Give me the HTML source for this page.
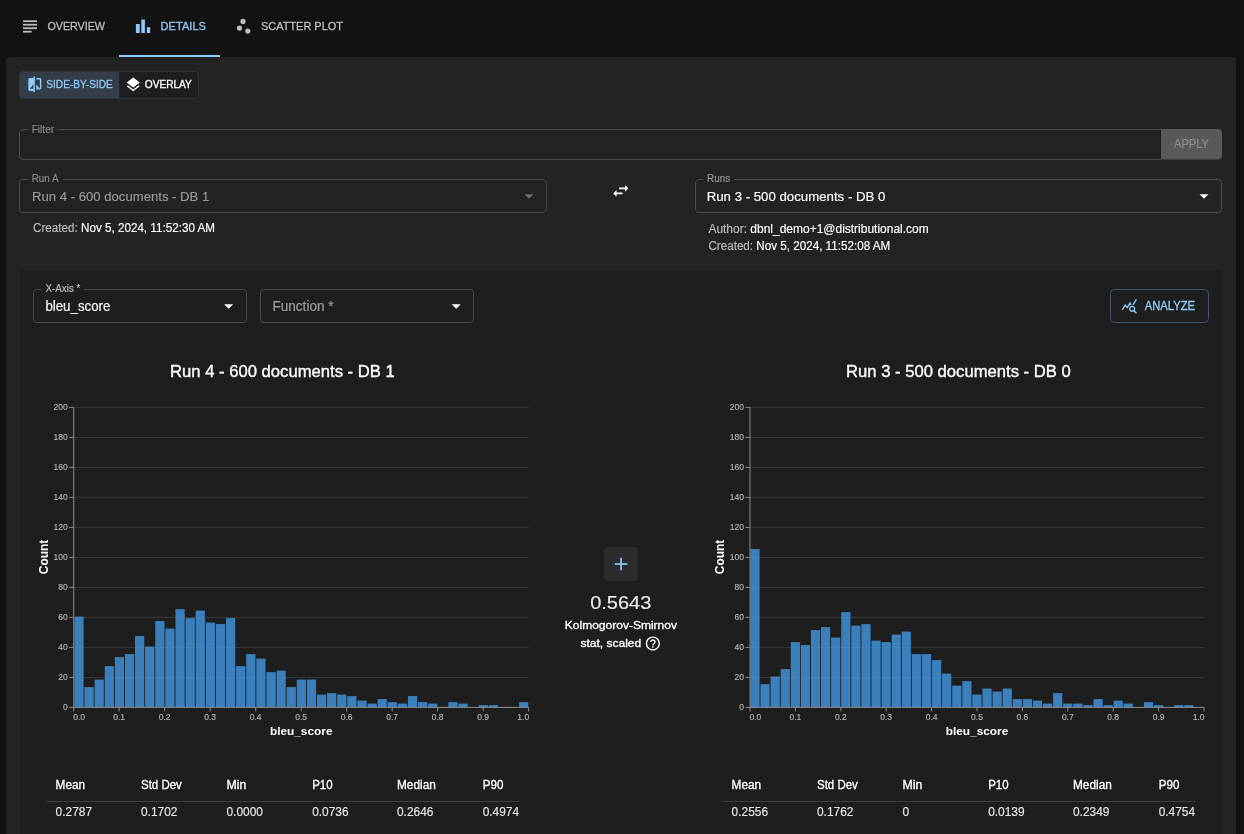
<!DOCTYPE html><html><head><meta charset="utf-8"><title>Details</title><style>
html,body{margin:0;padding:0;background:#121212;width:1244px;height:834px;overflow:hidden}
svg{display:block;will-change:transform;font-family:"Liberation Sans", sans-serif}
</style></head><body>
<svg width="1244" height="834" viewBox="0 0 1244 834">
<rect x="0" y="0" width="1244" height="834" fill="#121212"/>
<rect x="23" y="20.3" width="14" height="1.8" fill="#bdbdbd"/>
<rect x="23" y="23.8" width="14" height="1.8" fill="#bdbdbd"/>
<rect x="23" y="27.3" width="14" height="1.8" fill="#bdbdbd"/>
<rect x="23" y="30.8" width="8.7" height="1.8" fill="#bdbdbd"/>
<text x="47.4" y="30.4" font-size="11.5" fill="#bdbdbd" textLength="57.6" lengthAdjust="spacingAndGlyphs" stroke="#bdbdbd" stroke-width="0.3">OVERVIEW</text>
<rect x="135.9" y="24" width="3.8" height="9" fill="#90caf9"/>
<rect x="141.3" y="19.5" width="3.6" height="13.5" fill="#90caf9"/>
<rect x="146.8" y="27.2" width="3.4" height="5.8" fill="#90caf9"/>
<text x="160.6" y="30.4" font-size="11.5" fill="#90caf9" textLength="45.4" lengthAdjust="spacingAndGlyphs" stroke="#90caf9" stroke-width="0.3">DETAILS</text>
<rect x="119" y="55" width="101" height="2" fill="#90caf9"/>
<circle cx="243" cy="21.4" r="2.6" fill="#bdbdbd"/>
<circle cx="239.5" cy="28.1" r="2.6" fill="#bdbdbd"/>
<circle cx="247.8" cy="31.1" r="2.6" fill="#bdbdbd"/>
<text x="261" y="30.3" font-size="11.5" fill="#bdbdbd" textLength="82" lengthAdjust="spacingAndGlyphs" stroke="#bdbdbd" stroke-width="0.3">SCATTER PLOT</text>
<rect x="6" y="57" width="1230" height="820" rx="4" fill="#232323"/>
<rect x="19.5" y="71.5" width="179" height="27" rx="4" fill="#1e1e1e" stroke="#333333" stroke-width="1"/>
<path d="M119.2,71.5 H23.5 A4,4 0 0 0 19.5,75.5 V94.5 A4,4 0 0 0 23.5,98.5 H119.2 Z" fill="#343d48"/>
<g transform="translate(26.2,75.8) scale(0.72)"><path d="M10 3H5c-1.11 0-2 .9-2 2v14c0 1.1.89 2 2 2h5v2h2V1h-2v2zm0 15H5l5-6v6zm9-15h-5v2h5v13l-5-6v7h5c1.1 0 2-.9 2-2V5c0-1.1-.9-2-2-2z" fill="#90caf9"/></g>
<text x="46.3" y="88.2" font-size="10.6" fill="#90caf9" textLength="66.5" lengthAdjust="spacingAndGlyphs" stroke="#90caf9" stroke-width="0.3">SIDE-BY-SIDE</text>
<g transform="translate(124.6,76.1) scale(0.72)"><path d="m11.99 18.54-7.37-5.73L3 14.07l9 7 9-7-1.63-1.27zM12 16l7.36-5.73L21 9l-9-7-9 7 1.63 1.27L12 16z" fill="#ffffff"/></g>
<text x="144.8" y="88.2" font-size="10.6" fill="#ffffff" textLength="47" lengthAdjust="spacingAndGlyphs" stroke="#ffffff" stroke-width="0.3">OVERLAY</text>
<path d="M27.7,129.5 H23 A3.5,3.5 0 0 0 19.5,133 V156 A3.5,3.5 0 0 0 23,159.5 H1161 M1161,129.5 H57.7" fill="none" stroke="#4a4a4a" stroke-width="1"/>
<rect x="1160" y="130" width="1" height="29" fill="#1c1c1c"/>
<path d="M1161,129 H1218 A4,4 0 0 1 1222,133 V155.5 A4,4 0 0 1 1218,159.5 H1161 Z" fill="#595959"/>
<text x="1191.5" y="148.3" font-size="12" fill="#8e8e8e" text-anchor="middle" textLength="35" lengthAdjust="spacingAndGlyphs" stroke="#8e8e8e" stroke-width="0.2">APPLY</text>
<text x="31.7" y="132.7" font-size="10" fill="#8c8c8c" textLength="22.5" lengthAdjust="spacingAndGlyphs" stroke="#8c8c8c" stroke-width="0.15">Filter</text>
<rect x="19.5" y="179.5" width="527.0" height="33.0" rx="3.5" fill="none" stroke="none"/>
<path d="M27.7,179.5 H23.0 A3.5,3.5 0 0 0 19.5,183.0 V209.0 A3.5,3.5 0 0 0 23.0,212.5 H543.0 A3.5,3.5 0 0 0 546.5,209.0 V183.0 A3.5,3.5 0 0 0 543.0,179.5 H62.7" fill="none" stroke="#4a4a4a" stroke-width="1"/>
<text x="31.7" y="181.7" font-size="10" fill="#8c8c8c" textLength="27" lengthAdjust="spacingAndGlyphs" stroke="#8c8c8c" stroke-width="0.15">Run A</text>
<text x="32" y="200.5" font-size="13" fill="#9a9a9a" textLength="177.3" lengthAdjust="spacingAndGlyphs" stroke="#9a9a9a" stroke-width="0.15">Run 4 - 600 documents - DB 1</text>
<path d="M524.50,194.25 l4.50,4.50 l4.50,-4.50z" fill="#6e6e6e"/>
<text x="33" y="232.2" font-size="12" fill="#bdbdbd" stroke="#bdbdbd" stroke-width="0.15" textLength="182" lengthAdjust="spacingAndGlyphs">Created: <tspan fill="#ffffff" stroke="#ffffff">Nov 5, 2024, 11:52:30 AM</tspan></text>
<g transform="translate(610.7,180.8) scale(0.84)"><path d="M6.99 11 3 15l3.99 4v-3H14v-2H6.99v-3zM21 9l-3.99-4v3H10v2h7.01v3L21 9z" fill="#ffffff"/></g>
<rect x="695.5" y="179.5" width="526.0" height="33.0" rx="3.5" fill="none" stroke="none"/>
<path d="M703.1,179.5 H699.0 A3.5,3.5 0 0 0 695.5,183.0 V209.0 A3.5,3.5 0 0 0 699.0,212.5 H1218.0 A3.5,3.5 0 0 0 1221.5,209.0 V183.0 A3.5,3.5 0 0 0 1218.0,179.5 H734.1" fill="none" stroke="#4c4c4c" stroke-width="1"/>
<text x="707.1" y="181.7" font-size="10" fill="#9a9a9a" textLength="23" lengthAdjust="spacingAndGlyphs" stroke="#9a9a9a" stroke-width="0.15">Runs</text>
<text x="706.7" y="200.5" font-size="13" fill="#ffffff" textLength="178.7" lengthAdjust="spacingAndGlyphs" stroke="#ffffff" stroke-width="0.15">Run 3 - 500 documents - DB 0</text>
<path d="M1199.50,194.25 l4.50,4.50 l4.50,-4.50z" fill="#ffffff"/>
<text x="708.4" y="232.9" font-size="12" fill="#bdbdbd" stroke="#bdbdbd" stroke-width="0.15" textLength="220.3" lengthAdjust="spacingAndGlyphs">Author: <tspan fill="#ffffff" stroke="#ffffff">dbnl_demo+1@distributional.com</tspan></text>
<text x="708.4" y="249.6" font-size="12" fill="#bdbdbd" stroke="#bdbdbd" stroke-width="0.15" textLength="181.8" lengthAdjust="spacingAndGlyphs">Created: <tspan fill="#ffffff" stroke="#ffffff">Nov 5, 2024, 11:52:08 AM</tspan></text>
<rect x="20" y="270" width="1202" height="620" rx="4" fill="#1e1e1e"/>
<rect x="33.5" y="289.5" width="213.0" height="33.0" rx="3.5" fill="none" stroke="none"/>
<path d="M41.4,289.5 H37.0 A3.5,3.5 0 0 0 33.5,293.0 V319.0 A3.5,3.5 0 0 0 37.0,322.5 H243.0 A3.5,3.5 0 0 0 246.5,319.0 V293.0 A3.5,3.5 0 0 0 243.0,289.5 H84.4" fill="none" stroke="#4a4a4a" stroke-width="1"/>
<text x="45.4" y="291.9" font-size="10" fill="#bdbdbd" textLength="35" lengthAdjust="spacingAndGlyphs" stroke="#bdbdbd" stroke-width="0.15">X-Axis *</text>
<text x="45.4" y="310.7" font-size="14" fill="#ffffff" textLength="65" lengthAdjust="spacingAndGlyphs" stroke="#ffffff" stroke-width="0.15">bleu_score</text>
<path d="M224.20,304.25 l4.50,4.50 l4.50,-4.50z" fill="#ffffff"/>
<rect x="260.5" y="289.5" width="213.0" height="33.0" rx="3.5" fill="none" stroke="#4a4a4a" stroke-width="1"/>
<text x="272.5" y="310.7" font-size="14" fill="#a0a0a0" textLength="61" lengthAdjust="spacingAndGlyphs" stroke="#a0a0a0" stroke-width="0.15">Function *</text>
<path d="M451.70,304.25 l4.50,4.50 l4.50,-4.50z" fill="#ffffff"/>
<rect x="1110.5" y="289.5" width="98" height="33" rx="4" fill="none" stroke="#3f5568" stroke-width="1"/>
<text x="1144.8" y="310.1" font-size="12" fill="#90caf9" textLength="50.2" lengthAdjust="spacingAndGlyphs" stroke="#90caf9" stroke-width="0.3">ANALYZE</text>
<g transform="translate(1120.9,297.6) scale(0.7)"><path d="M19.88 18.47c.44-.7.7-1.51.7-2.39 0-2.49-2.01-4.5-4.5-4.5s-4.5 2.01-4.5 4.5 2.01 4.5 4.49 4.5c.88 0 1.7-.26 2.39-.7L21.58 23 23 21.58l-3.12-3.11zm-3.8.11c-1.38 0-2.5-1.120-2.5-2.5s1.12-2.5 2.5-2.5 2.5 1.12 2.5 2.5-1.12 2.5-2.5 2.5zm-.36-8.5c-.74.02-1.45.18-2.1.45l-.55-.83-3.8 6.18-3.01-3.52-3.63 5.81L1 17l5-8 3 3.5L13 6l2.72 4.08zm2.59.5c-.64-.28-1.33-.45-2.050-.49L21.38 2 23 3.18l-4.69 7.4z" fill="#90caf9"/></g>
<line x1="69.7" y1="707.4" x2="528.7" y2="707.4" stroke="#3a3a3a" stroke-width="1"/>
<line x1="69.7" y1="677.4" x2="528.7" y2="677.4" stroke="#3a3a3a" stroke-width="1"/>
<line x1="69.7" y1="647.4" x2="528.7" y2="647.4" stroke="#3a3a3a" stroke-width="1"/>
<line x1="69.7" y1="617.4" x2="528.7" y2="617.4" stroke="#3a3a3a" stroke-width="1"/>
<line x1="69.7" y1="587.4" x2="528.7" y2="587.4" stroke="#3a3a3a" stroke-width="1"/>
<line x1="69.7" y1="557.4" x2="528.7" y2="557.4" stroke="#3a3a3a" stroke-width="1"/>
<line x1="69.7" y1="527.4" x2="528.7" y2="527.4" stroke="#3a3a3a" stroke-width="1"/>
<line x1="69.7" y1="497.4" x2="528.7" y2="497.4" stroke="#3a3a3a" stroke-width="1"/>
<line x1="69.7" y1="467.4" x2="528.7" y2="467.4" stroke="#3a3a3a" stroke-width="1"/>
<line x1="69.7" y1="437.4" x2="528.7" y2="437.4" stroke="#3a3a3a" stroke-width="1"/>
<line x1="69.7" y1="407.4" x2="528.7" y2="407.4" stroke="#3a3a3a" stroke-width="1"/>
<rect x="74.40" y="616.60" width="9.21" height="90.80" fill="#4395e0" fill-opacity="0.82"/>
<rect x="84.51" y="687.10" width="9.21" height="20.30" fill="#4395e0" fill-opacity="0.82"/>
<rect x="94.61" y="679.60" width="9.21" height="27.80" fill="#4395e0" fill-opacity="0.82"/>
<rect x="104.72" y="666.10" width="9.21" height="41.30" fill="#4395e0" fill-opacity="0.82"/>
<rect x="114.83" y="657.10" width="9.21" height="50.30" fill="#4395e0" fill-opacity="0.82"/>
<rect x="124.94" y="654.10" width="9.21" height="53.30" fill="#4395e0" fill-opacity="0.82"/>
<rect x="135.04" y="636.10" width="9.21" height="71.30" fill="#4395e0" fill-opacity="0.82"/>
<rect x="145.15" y="646.60" width="9.21" height="60.80" fill="#4395e0" fill-opacity="0.82"/>
<rect x="155.26" y="621.10" width="9.21" height="86.30" fill="#4395e0" fill-opacity="0.82"/>
<rect x="165.36" y="628.60" width="9.21" height="78.80" fill="#4395e0" fill-opacity="0.82"/>
<rect x="175.47" y="609.10" width="9.21" height="98.30" fill="#4395e0" fill-opacity="0.82"/>
<rect x="185.58" y="618.10" width="9.21" height="89.30" fill="#4395e0" fill-opacity="0.82"/>
<rect x="195.68" y="610.60" width="9.21" height="96.80" fill="#4395e0" fill-opacity="0.82"/>
<rect x="205.79" y="622.60" width="9.21" height="84.80" fill="#4395e0" fill-opacity="0.82"/>
<rect x="215.90" y="624.10" width="9.21" height="83.30" fill="#4395e0" fill-opacity="0.82"/>
<rect x="226.00" y="618.10" width="9.21" height="89.30" fill="#4395e0" fill-opacity="0.82"/>
<rect x="236.11" y="666.10" width="9.21" height="41.30" fill="#4395e0" fill-opacity="0.82"/>
<rect x="246.22" y="654.10" width="9.21" height="53.30" fill="#4395e0" fill-opacity="0.82"/>
<rect x="256.33" y="658.60" width="9.21" height="48.80" fill="#4395e0" fill-opacity="0.82"/>
<rect x="266.43" y="672.10" width="9.21" height="35.30" fill="#4395e0" fill-opacity="0.82"/>
<rect x="276.54" y="670.60" width="9.21" height="36.80" fill="#4395e0" fill-opacity="0.82"/>
<rect x="286.65" y="687.10" width="9.21" height="20.30" fill="#4395e0" fill-opacity="0.82"/>
<rect x="296.75" y="679.60" width="9.21" height="27.80" fill="#4395e0" fill-opacity="0.82"/>
<rect x="306.86" y="679.60" width="9.21" height="27.80" fill="#4395e0" fill-opacity="0.82"/>
<rect x="316.97" y="694.60" width="9.21" height="12.80" fill="#4395e0" fill-opacity="0.82"/>
<rect x="327.07" y="693.10" width="9.21" height="14.30" fill="#4395e0" fill-opacity="0.82"/>
<rect x="337.18" y="694.60" width="9.21" height="12.80" fill="#4395e0" fill-opacity="0.82"/>
<rect x="347.29" y="696.10" width="9.21" height="11.30" fill="#4395e0" fill-opacity="0.82"/>
<rect x="357.40" y="700.60" width="9.21" height="6.80" fill="#4395e0" fill-opacity="0.82"/>
<rect x="367.50" y="703.60" width="9.21" height="3.80" fill="#4395e0" fill-opacity="0.82"/>
<rect x="377.61" y="699.10" width="9.21" height="8.30" fill="#4395e0" fill-opacity="0.82"/>
<rect x="387.72" y="702.10" width="9.21" height="5.30" fill="#4395e0" fill-opacity="0.82"/>
<rect x="397.82" y="703.60" width="9.21" height="3.80" fill="#4395e0" fill-opacity="0.82"/>
<rect x="407.93" y="696.10" width="9.21" height="11.30" fill="#4395e0" fill-opacity="0.82"/>
<rect x="418.04" y="702.10" width="9.21" height="5.30" fill="#4395e0" fill-opacity="0.82"/>
<rect x="428.14" y="703.60" width="9.21" height="3.80" fill="#4395e0" fill-opacity="0.82"/>
<rect x="448.36" y="702.10" width="9.21" height="5.30" fill="#4395e0" fill-opacity="0.82"/>
<rect x="458.47" y="703.60" width="9.21" height="3.80" fill="#4395e0" fill-opacity="0.82"/>
<rect x="478.68" y="705.10" width="9.21" height="2.30" fill="#4395e0" fill-opacity="0.82"/>
<rect x="488.79" y="705.10" width="9.21" height="2.30" fill="#4395e0" fill-opacity="0.82"/>
<rect x="519.11" y="702.10" width="9.21" height="5.30" fill="#4395e0" fill-opacity="0.82"/>
<line x1="69.2" y1="707.4" x2="73.7" y2="707.4" stroke="#8a8a8a" stroke-width="1"/>
<text x="67.7" y="710.4" font-size="8.5" fill="#b4b4b4" text-anchor="end" stroke="#b4b4b4" stroke-width="0.15">0</text>
<line x1="69.2" y1="677.4" x2="73.7" y2="677.4" stroke="#8a8a8a" stroke-width="1"/>
<text x="67.7" y="680.4" font-size="8.5" fill="#b4b4b4" text-anchor="end" stroke="#b4b4b4" stroke-width="0.15">20</text>
<line x1="69.2" y1="647.4" x2="73.7" y2="647.4" stroke="#8a8a8a" stroke-width="1"/>
<text x="67.7" y="650.4" font-size="8.5" fill="#b4b4b4" text-anchor="end" stroke="#b4b4b4" stroke-width="0.15">40</text>
<line x1="69.2" y1="617.4" x2="73.7" y2="617.4" stroke="#8a8a8a" stroke-width="1"/>
<text x="67.7" y="620.4" font-size="8.5" fill="#b4b4b4" text-anchor="end" stroke="#b4b4b4" stroke-width="0.15">60</text>
<line x1="69.2" y1="587.4" x2="73.7" y2="587.4" stroke="#8a8a8a" stroke-width="1"/>
<text x="67.7" y="590.4" font-size="8.5" fill="#b4b4b4" text-anchor="end" stroke="#b4b4b4" stroke-width="0.15">80</text>
<line x1="69.2" y1="557.4" x2="73.7" y2="557.4" stroke="#8a8a8a" stroke-width="1"/>
<text x="67.7" y="560.4" font-size="8.5" fill="#b4b4b4" text-anchor="end" stroke="#b4b4b4" stroke-width="0.15">100</text>
<line x1="69.2" y1="527.4" x2="73.7" y2="527.4" stroke="#8a8a8a" stroke-width="1"/>
<text x="67.7" y="530.4" font-size="8.5" fill="#b4b4b4" text-anchor="end" stroke="#b4b4b4" stroke-width="0.15">120</text>
<line x1="69.2" y1="497.4" x2="73.7" y2="497.4" stroke="#8a8a8a" stroke-width="1"/>
<text x="67.7" y="500.4" font-size="8.5" fill="#b4b4b4" text-anchor="end" stroke="#b4b4b4" stroke-width="0.15">140</text>
<line x1="69.2" y1="467.4" x2="73.7" y2="467.4" stroke="#8a8a8a" stroke-width="1"/>
<text x="67.7" y="470.4" font-size="8.5" fill="#b4b4b4" text-anchor="end" stroke="#b4b4b4" stroke-width="0.15">160</text>
<line x1="69.2" y1="437.4" x2="73.7" y2="437.4" stroke="#8a8a8a" stroke-width="1"/>
<text x="67.7" y="440.4" font-size="8.5" fill="#b4b4b4" text-anchor="end" stroke="#b4b4b4" stroke-width="0.15">180</text>
<line x1="69.2" y1="407.4" x2="73.7" y2="407.4" stroke="#8a8a8a" stroke-width="1"/>
<text x="67.7" y="410.4" font-size="8.5" fill="#b4b4b4" text-anchor="end" stroke="#b4b4b4" stroke-width="0.15">200</text>
<line x1="73.7" y1="407.4" x2="73.7" y2="707.9" stroke="#8a8a8a" stroke-width="1"/>
<line x1="73.7" y1="707.4" x2="528.7" y2="707.4" stroke="#8a8a8a" stroke-width="1"/>
<line x1="73.7" y1="707.4" x2="73.7" y2="711.4" stroke="#8a8a8a" stroke-width="1"/>
<text x="73.2" y="719.8" font-size="8.5" fill="#b4b4b4" stroke="#b4b4b4" stroke-width="0.15">0.0</text>
<line x1="119.2" y1="707.4" x2="119.2" y2="711.4" stroke="#8a8a8a" stroke-width="1"/>
<text x="119.2" y="719.8" font-size="8.5" fill="#b4b4b4" text-anchor="middle" stroke="#b4b4b4" stroke-width="0.15">0.1</text>
<line x1="164.7" y1="707.4" x2="164.7" y2="711.4" stroke="#8a8a8a" stroke-width="1"/>
<text x="164.7" y="719.8" font-size="8.5" fill="#b4b4b4" text-anchor="middle" stroke="#b4b4b4" stroke-width="0.15">0.2</text>
<line x1="210.2" y1="707.4" x2="210.2" y2="711.4" stroke="#8a8a8a" stroke-width="1"/>
<text x="210.2" y="719.8" font-size="8.5" fill="#b4b4b4" text-anchor="middle" stroke="#b4b4b4" stroke-width="0.15">0.3</text>
<line x1="255.7" y1="707.4" x2="255.7" y2="711.4" stroke="#8a8a8a" stroke-width="1"/>
<text x="255.7" y="719.8" font-size="8.5" fill="#b4b4b4" text-anchor="middle" stroke="#b4b4b4" stroke-width="0.15">0.4</text>
<line x1="301.2" y1="707.4" x2="301.2" y2="711.4" stroke="#8a8a8a" stroke-width="1"/>
<text x="301.2" y="719.8" font-size="8.5" fill="#b4b4b4" text-anchor="middle" stroke="#b4b4b4" stroke-width="0.15">0.5</text>
<line x1="346.7" y1="707.4" x2="346.7" y2="711.4" stroke="#8a8a8a" stroke-width="1"/>
<text x="346.7" y="719.8" font-size="8.5" fill="#b4b4b4" text-anchor="middle" stroke="#b4b4b4" stroke-width="0.15">0.6</text>
<line x1="392.2" y1="707.4" x2="392.2" y2="711.4" stroke="#8a8a8a" stroke-width="1"/>
<text x="392.2" y="719.8" font-size="8.5" fill="#b4b4b4" text-anchor="middle" stroke="#b4b4b4" stroke-width="0.15">0.7</text>
<line x1="437.7" y1="707.4" x2="437.7" y2="711.4" stroke="#8a8a8a" stroke-width="1"/>
<text x="437.7" y="719.8" font-size="8.5" fill="#b4b4b4" text-anchor="middle" stroke="#b4b4b4" stroke-width="0.15">0.8</text>
<line x1="483.2" y1="707.4" x2="483.2" y2="711.4" stroke="#8a8a8a" stroke-width="1"/>
<text x="483.2" y="719.8" font-size="8.5" fill="#b4b4b4" text-anchor="middle" stroke="#b4b4b4" stroke-width="0.15">0.9</text>
<line x1="528.7" y1="707.4" x2="528.7" y2="711.4" stroke="#8a8a8a" stroke-width="1"/>
<text x="529.2" y="719.8" font-size="8.5" fill="#b4b4b4" text-anchor="end" stroke="#b4b4b4" stroke-width="0.15">1.0</text>
<text x="301.2" y="735" font-size="11.5" fill="#ffffff" text-anchor="middle" textLength="62.6" lengthAdjust="spacingAndGlyphs" font-weight="bold">bleu_score</text>
<text x="0" y="0" font-size="12" font-weight="bold" fill="#ffffff" text-anchor="middle" textLength="34.5" lengthAdjust="spacingAndGlyphs" transform="translate(47.8,556.9) rotate(-90)">Count</text>
<text x="282.4" y="376.5" font-size="17" fill="#ffffff" text-anchor="middle" textLength="224.7" lengthAdjust="spacingAndGlyphs" stroke="#ffffff" stroke-width="0.35">Run 4 - 600 documents - DB 1</text>
<line x1="746.0" y1="707.4" x2="1204.0" y2="707.4" stroke="#3a3a3a" stroke-width="1"/>
<line x1="746.0" y1="677.4" x2="1204.0" y2="677.4" stroke="#3a3a3a" stroke-width="1"/>
<line x1="746.0" y1="647.4" x2="1204.0" y2="647.4" stroke="#3a3a3a" stroke-width="1"/>
<line x1="746.0" y1="617.4" x2="1204.0" y2="617.4" stroke="#3a3a3a" stroke-width="1"/>
<line x1="746.0" y1="587.4" x2="1204.0" y2="587.4" stroke="#3a3a3a" stroke-width="1"/>
<line x1="746.0" y1="557.4" x2="1204.0" y2="557.4" stroke="#3a3a3a" stroke-width="1"/>
<line x1="746.0" y1="527.4" x2="1204.0" y2="527.4" stroke="#3a3a3a" stroke-width="1"/>
<line x1="746.0" y1="497.4" x2="1204.0" y2="497.4" stroke="#3a3a3a" stroke-width="1"/>
<line x1="746.0" y1="467.4" x2="1204.0" y2="467.4" stroke="#3a3a3a" stroke-width="1"/>
<line x1="746.0" y1="437.4" x2="1204.0" y2="437.4" stroke="#3a3a3a" stroke-width="1"/>
<line x1="746.0" y1="407.4" x2="1204.0" y2="407.4" stroke="#3a3a3a" stroke-width="1"/>
<rect x="750.40" y="549.10" width="9.19" height="158.30" fill="#4395e0" fill-opacity="0.82"/>
<rect x="760.49" y="684.10" width="9.19" height="23.30" fill="#4395e0" fill-opacity="0.82"/>
<rect x="770.58" y="676.60" width="9.19" height="30.80" fill="#4395e0" fill-opacity="0.82"/>
<rect x="780.67" y="669.10" width="9.19" height="38.30" fill="#4395e0" fill-opacity="0.82"/>
<rect x="790.76" y="642.10" width="9.19" height="65.30" fill="#4395e0" fill-opacity="0.82"/>
<rect x="800.85" y="645.10" width="9.19" height="62.30" fill="#4395e0" fill-opacity="0.82"/>
<rect x="810.94" y="630.10" width="9.19" height="77.30" fill="#4395e0" fill-opacity="0.82"/>
<rect x="821.03" y="627.10" width="9.19" height="80.30" fill="#4395e0" fill-opacity="0.82"/>
<rect x="831.12" y="637.60" width="9.19" height="69.80" fill="#4395e0" fill-opacity="0.82"/>
<rect x="841.21" y="612.10" width="9.19" height="95.30" fill="#4395e0" fill-opacity="0.82"/>
<rect x="851.30" y="625.60" width="9.19" height="81.80" fill="#4395e0" fill-opacity="0.82"/>
<rect x="861.39" y="624.10" width="9.19" height="83.30" fill="#4395e0" fill-opacity="0.82"/>
<rect x="871.48" y="640.60" width="9.19" height="66.80" fill="#4395e0" fill-opacity="0.82"/>
<rect x="881.57" y="642.10" width="9.19" height="65.30" fill="#4395e0" fill-opacity="0.82"/>
<rect x="891.66" y="634.60" width="9.19" height="72.80" fill="#4395e0" fill-opacity="0.82"/>
<rect x="901.75" y="631.60" width="9.19" height="75.80" fill="#4395e0" fill-opacity="0.82"/>
<rect x="911.84" y="654.10" width="9.19" height="53.30" fill="#4395e0" fill-opacity="0.82"/>
<rect x="921.93" y="654.10" width="9.19" height="53.30" fill="#4395e0" fill-opacity="0.82"/>
<rect x="932.02" y="660.10" width="9.19" height="47.30" fill="#4395e0" fill-opacity="0.82"/>
<rect x="942.11" y="673.60" width="9.19" height="33.80" fill="#4395e0" fill-opacity="0.82"/>
<rect x="952.20" y="685.60" width="9.19" height="21.80" fill="#4395e0" fill-opacity="0.82"/>
<rect x="962.29" y="681.10" width="9.19" height="26.30" fill="#4395e0" fill-opacity="0.82"/>
<rect x="972.38" y="694.60" width="9.19" height="12.80" fill="#4395e0" fill-opacity="0.82"/>
<rect x="982.47" y="688.60" width="9.19" height="18.80" fill="#4395e0" fill-opacity="0.82"/>
<rect x="992.56" y="691.60" width="9.19" height="15.80" fill="#4395e0" fill-opacity="0.82"/>
<rect x="1002.65" y="688.60" width="9.19" height="18.80" fill="#4395e0" fill-opacity="0.82"/>
<rect x="1012.74" y="699.10" width="9.19" height="8.30" fill="#4395e0" fill-opacity="0.82"/>
<rect x="1022.83" y="699.10" width="9.19" height="8.30" fill="#4395e0" fill-opacity="0.82"/>
<rect x="1032.92" y="700.60" width="9.19" height="6.80" fill="#4395e0" fill-opacity="0.82"/>
<rect x="1043.01" y="703.60" width="9.19" height="3.80" fill="#4395e0" fill-opacity="0.82"/>
<rect x="1053.10" y="693.10" width="9.19" height="14.30" fill="#4395e0" fill-opacity="0.82"/>
<rect x="1063.19" y="703.60" width="9.19" height="3.80" fill="#4395e0" fill-opacity="0.82"/>
<rect x="1073.28" y="703.60" width="9.19" height="3.80" fill="#4395e0" fill-opacity="0.82"/>
<rect x="1083.37" y="705.10" width="9.19" height="2.30" fill="#4395e0" fill-opacity="0.82"/>
<rect x="1093.46" y="699.10" width="9.19" height="8.30" fill="#4395e0" fill-opacity="0.82"/>
<rect x="1103.55" y="705.10" width="9.19" height="2.30" fill="#4395e0" fill-opacity="0.82"/>
<rect x="1113.64" y="700.60" width="9.19" height="6.80" fill="#4395e0" fill-opacity="0.82"/>
<rect x="1123.73" y="703.60" width="9.19" height="3.80" fill="#4395e0" fill-opacity="0.82"/>
<rect x="1143.91" y="702.10" width="9.19" height="5.30" fill="#4395e0" fill-opacity="0.82"/>
<rect x="1154.00" y="705.10" width="9.19" height="2.30" fill="#4395e0" fill-opacity="0.82"/>
<rect x="1174.18" y="705.10" width="9.19" height="2.30" fill="#4395e0" fill-opacity="0.82"/>
<rect x="1184.27" y="705.10" width="9.19" height="2.30" fill="#4395e0" fill-opacity="0.82"/>
<line x1="745.5" y1="707.4" x2="750.0" y2="707.4" stroke="#8a8a8a" stroke-width="1"/>
<text x="744.0" y="710.4" font-size="8.5" fill="#b4b4b4" text-anchor="end" stroke="#b4b4b4" stroke-width="0.15">0</text>
<line x1="745.5" y1="677.4" x2="750.0" y2="677.4" stroke="#8a8a8a" stroke-width="1"/>
<text x="744.0" y="680.4" font-size="8.5" fill="#b4b4b4" text-anchor="end" stroke="#b4b4b4" stroke-width="0.15">20</text>
<line x1="745.5" y1="647.4" x2="750.0" y2="647.4" stroke="#8a8a8a" stroke-width="1"/>
<text x="744.0" y="650.4" font-size="8.5" fill="#b4b4b4" text-anchor="end" stroke="#b4b4b4" stroke-width="0.15">40</text>
<line x1="745.5" y1="617.4" x2="750.0" y2="617.4" stroke="#8a8a8a" stroke-width="1"/>
<text x="744.0" y="620.4" font-size="8.5" fill="#b4b4b4" text-anchor="end" stroke="#b4b4b4" stroke-width="0.15">60</text>
<line x1="745.5" y1="587.4" x2="750.0" y2="587.4" stroke="#8a8a8a" stroke-width="1"/>
<text x="744.0" y="590.4" font-size="8.5" fill="#b4b4b4" text-anchor="end" stroke="#b4b4b4" stroke-width="0.15">80</text>
<line x1="745.5" y1="557.4" x2="750.0" y2="557.4" stroke="#8a8a8a" stroke-width="1"/>
<text x="744.0" y="560.4" font-size="8.5" fill="#b4b4b4" text-anchor="end" stroke="#b4b4b4" stroke-width="0.15">100</text>
<line x1="745.5" y1="527.4" x2="750.0" y2="527.4" stroke="#8a8a8a" stroke-width="1"/>
<text x="744.0" y="530.4" font-size="8.5" fill="#b4b4b4" text-anchor="end" stroke="#b4b4b4" stroke-width="0.15">120</text>
<line x1="745.5" y1="497.4" x2="750.0" y2="497.4" stroke="#8a8a8a" stroke-width="1"/>
<text x="744.0" y="500.4" font-size="8.5" fill="#b4b4b4" text-anchor="end" stroke="#b4b4b4" stroke-width="0.15">140</text>
<line x1="745.5" y1="467.4" x2="750.0" y2="467.4" stroke="#8a8a8a" stroke-width="1"/>
<text x="744.0" y="470.4" font-size="8.5" fill="#b4b4b4" text-anchor="end" stroke="#b4b4b4" stroke-width="0.15">160</text>
<line x1="745.5" y1="437.4" x2="750.0" y2="437.4" stroke="#8a8a8a" stroke-width="1"/>
<text x="744.0" y="440.4" font-size="8.5" fill="#b4b4b4" text-anchor="end" stroke="#b4b4b4" stroke-width="0.15">180</text>
<line x1="745.5" y1="407.4" x2="750.0" y2="407.4" stroke="#8a8a8a" stroke-width="1"/>
<text x="744.0" y="410.4" font-size="8.5" fill="#b4b4b4" text-anchor="end" stroke="#b4b4b4" stroke-width="0.15">200</text>
<line x1="750.0" y1="407.4" x2="750.0" y2="707.9" stroke="#8a8a8a" stroke-width="1"/>
<line x1="750.0" y1="707.4" x2="1204.0" y2="707.4" stroke="#8a8a8a" stroke-width="1"/>
<line x1="750.0" y1="707.4" x2="750.0" y2="711.4" stroke="#8a8a8a" stroke-width="1"/>
<text x="749.5" y="719.8" font-size="8.5" fill="#b4b4b4" stroke="#b4b4b4" stroke-width="0.15">0.0</text>
<line x1="795.4" y1="707.4" x2="795.4" y2="711.4" stroke="#8a8a8a" stroke-width="1"/>
<text x="795.4" y="719.8" font-size="8.5" fill="#b4b4b4" text-anchor="middle" stroke="#b4b4b4" stroke-width="0.15">0.1</text>
<line x1="840.8" y1="707.4" x2="840.8" y2="711.4" stroke="#8a8a8a" stroke-width="1"/>
<text x="840.8" y="719.8" font-size="8.5" fill="#b4b4b4" text-anchor="middle" stroke="#b4b4b4" stroke-width="0.15">0.2</text>
<line x1="886.2" y1="707.4" x2="886.2" y2="711.4" stroke="#8a8a8a" stroke-width="1"/>
<text x="886.2" y="719.8" font-size="8.5" fill="#b4b4b4" text-anchor="middle" stroke="#b4b4b4" stroke-width="0.15">0.3</text>
<line x1="931.6" y1="707.4" x2="931.6" y2="711.4" stroke="#8a8a8a" stroke-width="1"/>
<text x="931.6" y="719.8" font-size="8.5" fill="#b4b4b4" text-anchor="middle" stroke="#b4b4b4" stroke-width="0.15">0.4</text>
<line x1="977.0" y1="707.4" x2="977.0" y2="711.4" stroke="#8a8a8a" stroke-width="1"/>
<text x="977.0" y="719.8" font-size="8.5" fill="#b4b4b4" text-anchor="middle" stroke="#b4b4b4" stroke-width="0.15">0.5</text>
<line x1="1022.4" y1="707.4" x2="1022.4" y2="711.4" stroke="#8a8a8a" stroke-width="1"/>
<text x="1022.4" y="719.8" font-size="8.5" fill="#b4b4b4" text-anchor="middle" stroke="#b4b4b4" stroke-width="0.15">0.6</text>
<line x1="1067.8" y1="707.4" x2="1067.8" y2="711.4" stroke="#8a8a8a" stroke-width="1"/>
<text x="1067.8" y="719.8" font-size="8.5" fill="#b4b4b4" text-anchor="middle" stroke="#b4b4b4" stroke-width="0.15">0.7</text>
<line x1="1113.2" y1="707.4" x2="1113.2" y2="711.4" stroke="#8a8a8a" stroke-width="1"/>
<text x="1113.2" y="719.8" font-size="8.5" fill="#b4b4b4" text-anchor="middle" stroke="#b4b4b4" stroke-width="0.15">0.8</text>
<line x1="1158.6" y1="707.4" x2="1158.6" y2="711.4" stroke="#8a8a8a" stroke-width="1"/>
<text x="1158.6" y="719.8" font-size="8.5" fill="#b4b4b4" text-anchor="middle" stroke="#b4b4b4" stroke-width="0.15">0.9</text>
<line x1="1204.0" y1="707.4" x2="1204.0" y2="711.4" stroke="#8a8a8a" stroke-width="1"/>
<text x="1204.5" y="719.8" font-size="8.5" fill="#b4b4b4" text-anchor="end" stroke="#b4b4b4" stroke-width="0.15">1.0</text>
<text x="977.0" y="735" font-size="11.5" fill="#ffffff" text-anchor="middle" textLength="62.6" lengthAdjust="spacingAndGlyphs" font-weight="bold">bleu_score</text>
<text x="0" y="0" font-size="12" font-weight="bold" fill="#ffffff" text-anchor="middle" textLength="34.5" lengthAdjust="spacingAndGlyphs" transform="translate(723.8,556.9) rotate(-90)">Count</text>
<text x="958.4" y="376.5" font-size="17" fill="#ffffff" text-anchor="middle" textLength="224.7" lengthAdjust="spacingAndGlyphs" stroke="#ffffff" stroke-width="0.35">Run 3 - 500 documents - DB 0</text>
<rect x="604" y="547" width="34" height="34" rx="4" fill="#2c2c2c"/>
<rect x="614.8" y="563.2" width="12.5" height="1.7" fill="#90caf9"/>
<rect x="620.2" y="557.8" width="1.7" height="12.5" fill="#90caf9"/>
<text x="620.8" y="608.7" font-size="19" fill="#ececec" text-anchor="middle" textLength="61.2" lengthAdjust="spacingAndGlyphs" stroke="#ececec" stroke-width="0.15">0.5643</text>
<text x="620.9" y="629" font-size="10.7" fill="#ffffff" text-anchor="middle" textLength="112.2" lengthAdjust="spacingAndGlyphs" stroke="#ffffff" stroke-width="0.3">Kolmogorov-Smirnov</text>
<text x="580.4" y="647" font-size="10.7" fill="#ffffff" textLength="60.8" lengthAdjust="spacingAndGlyphs" stroke="#ffffff" stroke-width="0.3">stat, scaled</text>
<g transform="translate(644.4,635) scale(0.708)"><path d="M11 18h2v-2h-2v2zm1-16C6.48 2 2 6.48 2 12s4.48 10 10 10 10-4.48 10-10S17.52 2 12 2zm0 18c-4.41 0-8-3.59-8-8s3.59-8 8-8 8 3.59 8 8-3.59 8-8 8zm0-14c-2.21 0-4 1.790-4 4h2c0-1.1.9-2 2-2s2 .9 2 2c0 2-3 1.75-3 5h2c0-2.25 3-2.5 3-5 0-2.21-1.79-4-4-4z" fill="#ffffff"/></g>
<text x="55.6" y="789.1" font-size="12" fill="#ffffff" textLength="29.5" lengthAdjust="spacingAndGlyphs" stroke="#ffffff" stroke-width="0.3">Mean</text>
<text x="55.6" y="816.1" font-size="12" fill="#e6e6e6" textLength="36.4" lengthAdjust="spacingAndGlyphs" stroke="#e6e6e6" stroke-width="0.15">0.2787</text>
<text x="141.0" y="789.1" font-size="12" fill="#ffffff" textLength="40.8" lengthAdjust="spacingAndGlyphs" stroke="#ffffff" stroke-width="0.3">Std Dev</text>
<text x="141.0" y="816.1" font-size="12" fill="#e6e6e6" textLength="36.4" lengthAdjust="spacingAndGlyphs" stroke="#e6e6e6" stroke-width="0.15">0.1702</text>
<text x="226.5" y="789.1" font-size="12" fill="#ffffff" textLength="19.8" lengthAdjust="spacingAndGlyphs" stroke="#ffffff" stroke-width="0.3">Min</text>
<text x="226.5" y="816.1" font-size="12" fill="#e6e6e6" textLength="36.4" lengthAdjust="spacingAndGlyphs" stroke="#e6e6e6" stroke-width="0.15">0.0000</text>
<text x="312.2" y="789.1" font-size="12" fill="#ffffff" textLength="20.4" lengthAdjust="spacingAndGlyphs" stroke="#ffffff" stroke-width="0.3">P10</text>
<text x="312.2" y="816.1" font-size="12" fill="#e6e6e6" textLength="36.4" lengthAdjust="spacingAndGlyphs" stroke="#e6e6e6" stroke-width="0.15">0.0736</text>
<text x="397.0" y="789.1" font-size="12" fill="#ffffff" textLength="38.8" lengthAdjust="spacingAndGlyphs" stroke="#ffffff" stroke-width="0.3">Median</text>
<text x="397.0" y="816.1" font-size="12" fill="#e6e6e6" textLength="36.4" lengthAdjust="spacingAndGlyphs" stroke="#e6e6e6" stroke-width="0.15">0.2646</text>
<text x="482.7" y="789.1" font-size="12" fill="#ffffff" textLength="20.7" lengthAdjust="spacingAndGlyphs" stroke="#ffffff" stroke-width="0.3">P90</text>
<text x="482.7" y="816.1" font-size="12" fill="#e6e6e6" textLength="36.4" lengthAdjust="spacingAndGlyphs" stroke="#e6e6e6" stroke-width="0.15">0.4974</text>
<line x1="47" y1="801.5" x2="519" y2="801.5" stroke="#3f3f3f" stroke-width="1"/>
<text x="731.6" y="789.1" font-size="12" fill="#ffffff" textLength="29.5" lengthAdjust="spacingAndGlyphs" stroke="#ffffff" stroke-width="0.3">Mean</text>
<text x="731.6" y="816.1" font-size="12" fill="#e6e6e6" textLength="36.4" lengthAdjust="spacingAndGlyphs" stroke="#e6e6e6" stroke-width="0.15">0.2556</text>
<text x="817.0" y="789.1" font-size="12" fill="#ffffff" textLength="40.8" lengthAdjust="spacingAndGlyphs" stroke="#ffffff" stroke-width="0.3">Std Dev</text>
<text x="817.0" y="816.1" font-size="12" fill="#e6e6e6" textLength="36.4" lengthAdjust="spacingAndGlyphs" stroke="#e6e6e6" stroke-width="0.15">0.1762</text>
<text x="902.5" y="789.1" font-size="12" fill="#ffffff" textLength="19.8" lengthAdjust="spacingAndGlyphs" stroke="#ffffff" stroke-width="0.3">Min</text>
<text x="902.5" y="816.1" font-size="12" fill="#e6e6e6" stroke="#e6e6e6" stroke-width="0.15">0</text>
<text x="988.2" y="789.1" font-size="12" fill="#ffffff" textLength="20.4" lengthAdjust="spacingAndGlyphs" stroke="#ffffff" stroke-width="0.3">P10</text>
<text x="988.2" y="816.1" font-size="12" fill="#e6e6e6" textLength="36.4" lengthAdjust="spacingAndGlyphs" stroke="#e6e6e6" stroke-width="0.15">0.0139</text>
<text x="1073.0" y="789.1" font-size="12" fill="#ffffff" textLength="38.8" lengthAdjust="spacingAndGlyphs" stroke="#ffffff" stroke-width="0.3">Median</text>
<text x="1073.0" y="816.1" font-size="12" fill="#e6e6e6" textLength="36.4" lengthAdjust="spacingAndGlyphs" stroke="#e6e6e6" stroke-width="0.15">0.2349</text>
<text x="1158.7" y="789.1" font-size="12" fill="#ffffff" textLength="20.7" lengthAdjust="spacingAndGlyphs" stroke="#ffffff" stroke-width="0.3">P90</text>
<text x="1158.7" y="816.1" font-size="12" fill="#e6e6e6" textLength="36.4" lengthAdjust="spacingAndGlyphs" stroke="#e6e6e6" stroke-width="0.15">0.4754</text>
<line x1="723" y1="801.5" x2="1195" y2="801.5" stroke="#3f3f3f" stroke-width="1"/>
</svg></body></html>
